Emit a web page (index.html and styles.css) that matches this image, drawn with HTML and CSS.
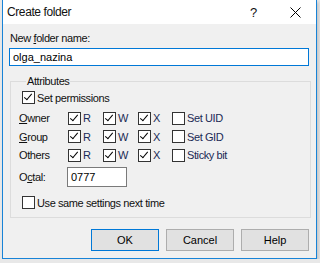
FILE: index.html
```html
<!DOCTYPE html>
<html lang="en">
<head>
    <meta charset="UTF-8">
    <title>Create folder</title>
    <link rel="stylesheet" href="styles.css">
</head>
<body>
    <div class="window">
        <div class="titlebar">
            <span class="title">Create folder</span>
            <span class="help-btn">?</span>
            <span class="close-btn">
                <svg width="11" height="11" viewBox="0 0 11 11"><path d="M0.5 0.5 L10.5 10.5 M10.5 0.5 L0.5 10.5" stroke="#000" stroke-width="1" fill="none"/></svg>
            </span>
        </div>
        <div class="content">
            <label class="name-label">New <u>f</u>older name:</label>
            <div class="name-field">
                <input type="text" class="name-input" value="olga_nazina">
            </div>

            <fieldset class="attributes">
                <legend>Attributes</legend>
                <label class="check set-perm"><span class="box checked"></span>Set permissions</label>

                <div class="perm-grid">
                    <span class="row-label"><u>O</u>wner</span>
                    <label class="check"><span class="box checked"></span>R</label>
                    <label class="check"><span class="box checked"></span>W</label>
                    <label class="check"><span class="box checked"></span>X</label>
                    <label class="check"><span class="box"></span>Set UID</label>

                    <span class="row-label"><u>G</u>roup</span>
                    <label class="check"><span class="box checked"></span>R</label>
                    <label class="check"><span class="box checked"></span>W</label>
                    <label class="check"><span class="box checked"></span>X</label>
                    <label class="check"><span class="box"></span>Set GID</label>

                    <span class="row-label">Others</span>
                    <label class="check"><span class="box checked"></span>R</label>
                    <label class="check"><span class="box checked"></span>W</label>
                    <label class="check"><span class="box checked"></span>X</label>
                    <label class="check"><span class="box"></span>Sticky bit</label>
                </div>

                <div class="octal-row">
                    <span class="row-label">O<u>c</u>tal:</span>
                    <input type="text" class="octal-input" value="0777">
                </div>

                <label class="check same-settings"><span class="box"></span>Use same settings next time</label>
            </fieldset>

            <div class="buttons">
                <button class="btn default">OK</button>
                <button class="btn">Cancel</button>
                <button class="btn">Help</button>
            </div>
        </div>
    </div>
</body>
</html>
```

FILE: styles.css
```css
body {
    margin: 0;
    background: #e8e8e8;
    font-family: "Liberation Sans", Arial, sans-serif;
    font-size: 11px;
    letter-spacing: -0.4px;
    color: #111;
}

.window {
    margin-left: 2px;
    width: 315px;
    height: 259px;
    box-sizing: border-box;
    border: 1px solid #1883d7;
    border-top: none;
    background: #f0f0f0;
    box-shadow: 2px 2px 3px rgba(0, 0, 0, 0.15);
}

.titlebar {
    height: 24px;
    background: #fff;
    display: flex;
    align-items: center;
    padding-left: 4px;
}

.title {
    font-size: 12px;
    flex: 1;
}

.help-btn {
    width: 12px;
    font-size: 13px;
    margin-right: 28px;
}

.close-btn {
    display: flex;
    margin-right: 15px;
}

.content {
    padding: 8px 6px 0 6px;
}

.name-label {
    display: block;
    padding-left: 1px;
    height: 16px;
}

.name-input {
    display: block;
    width: 300px;
    height: 18px;
    box-sizing: border-box;
    border: 1px solid #0078d7;
    padding: 0 3px;
    font: inherit;
    outline: none;
    background: #fff;
}

.attributes {
    margin: 9px 0 0 1px;
    width: 301px;
    height: 143px;
    box-sizing: border-box;
    border: 1px solid #dcdcdc;
    padding: 4px 0 0 11px;
}

.attributes legend {
    padding: 0 1px;
    margin-left: 4px;
}

.check {
    display: flex;
    align-items: center;
}

.box {
    width: 11px;
    height: 11px;
    border: 1px solid #333;
    background: #fff;
    margin-right: 2px;
    position: relative;
}

.box.checked::after {
    content: "";
    position: absolute;
    left: 3px;
    top: 0;
    width: 3px;
    height: 7px;
    border: solid #000;
    border-width: 0 1px 1px 0;
    transform: rotate(40deg);
}

.perm-grid {
    display: grid;
    grid-template-columns: 49px 35px 35px 34px auto;
    grid-auto-rows: 18.5px;
    align-items: center;
    margin-top: 5px;
    margin-left: -3px;
}

.perm-grid .check {
    color: #1a2a55;
}

.octal-row {
    display: flex;
    align-items: center;
    margin-top: 2.5px;
    margin-left: -3px;
}

.octal-row .row-label {
    width: 48px;
}

.octal-input {
    width: 60px;
    height: 20px;
    box-sizing: border-box;
    border: 1px solid #7a7a7a;
    padding: 0 3px;
    font: inherit;
    background: #fff;
}

.same-settings {
    margin-top: 9px;
}

.buttons {
    display: flex;
    justify-content: flex-end;
    gap: 7px;
    margin-top: 11px;
    padding-right: 1px;
}

.btn {
    width: 68px;
    height: 22px;
    background: #e1e1e1;
    border: 1px solid #adadad;
    font: inherit;
    padding: 0;
}

.btn.default {
    border-color: #0078d7;
}
```
